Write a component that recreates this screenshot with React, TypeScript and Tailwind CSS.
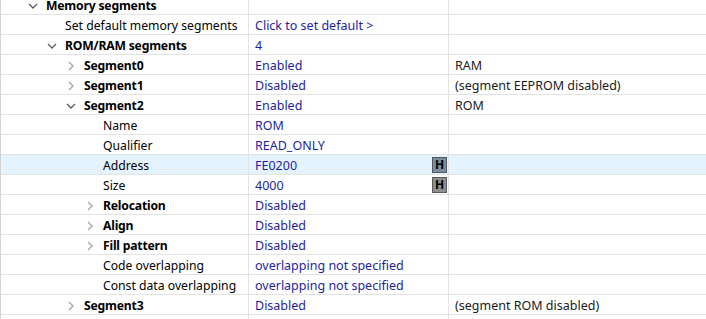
import React from "react";

type Row = {
  level: number;
  label: string;
  bold?: boolean;
  expand?: "down" | "right";
  value?: string;
  extra?: string;
  badge?: boolean;
  selected?: boolean;
};

const rows: Row[] = [
  { level: 0, label: "Memory segments", bold: true, expand: "down" },
  { level: 1, label: "Set default memory segments", value: "Click to set default >" },
  { level: 1, label: "ROM/RAM segments", bold: true, expand: "down", value: "4" },
  { level: 2, label: "Segment0", bold: true, expand: "right", value: "Enabled", extra: "RAM" },
  { level: 2, label: "Segment1", bold: true, expand: "right", value: "Disabled", extra: "(segment EEPROM disabled)" },
  { level: 2, label: "Segment2", bold: true, expand: "down", value: "Enabled", extra: "ROM" },
  { level: 3, label: "Name", value: "ROM" },
  { level: 3, label: "Qualifier", value: "READ_ONLY" },
  { level: 3, label: "Address", value: "FE0200", badge: true, selected: true },
  { level: 3, label: "Size", value: "4000", badge: true },
  { level: 3, label: "Relocation", bold: true, expand: "right", value: "Disabled" },
  { level: 3, label: "Align", bold: true, expand: "right", value: "Disabled" },
  { level: 3, label: "Fill pattern", bold: true, expand: "right", value: "Disabled" },
  { level: 3, label: "Code overlapping", value: "overlapping not specified" },
  { level: 3, label: "Const data overlapping", value: "overlapping not specified" },
  { level: 2, label: "Segment3", bold: true, expand: "right", value: "Disabled", extra: "(segment ROM disabled)" },
  { level: 0, label: "" },
];

function Chevron({ dir }: { dir: "down" | "right" }) {
  if (dir === "down") {
    return (
      <svg width="10" height="6" viewBox="0 0 10 6">
        <polyline points="1,1 5,5 9,1" fill="none" stroke="#5c5c5c" strokeWidth="1.3" />
      </svg>
    );
  }
  return (
    <svg width="6" height="10" viewBox="0 0 6 10">
      <polyline points="1,1 5,5 1,9" fill="none" stroke="#a6a6a6" strokeWidth="1.4" />
    </svg>
  );
}

function Badge({ selected }: { selected?: boolean }) {
  return (
    <div
      className={
        selected
          ? "w-[15px] h-[16px] flex items-center justify-center bg-[#7d8c9b] border border-[#4f5a66] text-[12px] font-bold text-black leading-none"
          : "w-[15px] h-[16px] flex items-center justify-center bg-[#8e8e8e] border border-[#5a5a5a] text-[12px] font-bold text-black leading-none"
      }
    >
      H
    </div>
  );
}

export default function App() {
  return (
    <div
      className="w-[706px] h-[319px] overflow-hidden bg-white border-l border-[#d4d4d4] text-[12.5px] text-black"
      style={{ fontFamily: '"Noto Sans", "Liberation Sans", sans-serif' }}
    >
      <div className="-mt-[5px] flex flex-col">
        {rows.map((r, i) => (
          <div
            key={i}
            className={
              r.selected
                ? "h-[20px] flex border-b border-[#e3e3e3] bg-[#e5f3ff]"
                : "h-[20px] flex border-b border-[#e3e3e3]"
            }
          >
            <div
              className="w-[248px] shrink-0 flex items-center border-r border-[#e3e3e3] whitespace-nowrap text-[12.2px]"
              style={{ paddingLeft: 24 + 19 * r.level }}
            >
              <div className="w-[15px] mr-[6px] flex items-center justify-center shrink-0 mt-[2px]">
                {r.expand && <Chevron dir={r.expand} />}
              </div>
              <span className={r.bold ? "mt-[4px] font-bold tracking-[-0.2px]" : "mt-[4px]"}>{r.label}</span>
            </div>
            <div className="w-[200px] shrink-0 flex items-center justify-between pl-[6px] pr-[1px] border-r border-[#e3e3e3] text-[#1e1ea0] whitespace-nowrap">
              <span className="mt-[4px]">{r.value}</span>
              {r.badge && <Badge selected={r.selected} />}
            </div>
            <div className="flex-1 flex items-center pl-[6px] text-[#1a1a1a] whitespace-nowrap">
              <span className="mt-[4px]">{r.extra}</span>
            </div>
          </div>
        ))}
      </div>
    </div>
  );
}
